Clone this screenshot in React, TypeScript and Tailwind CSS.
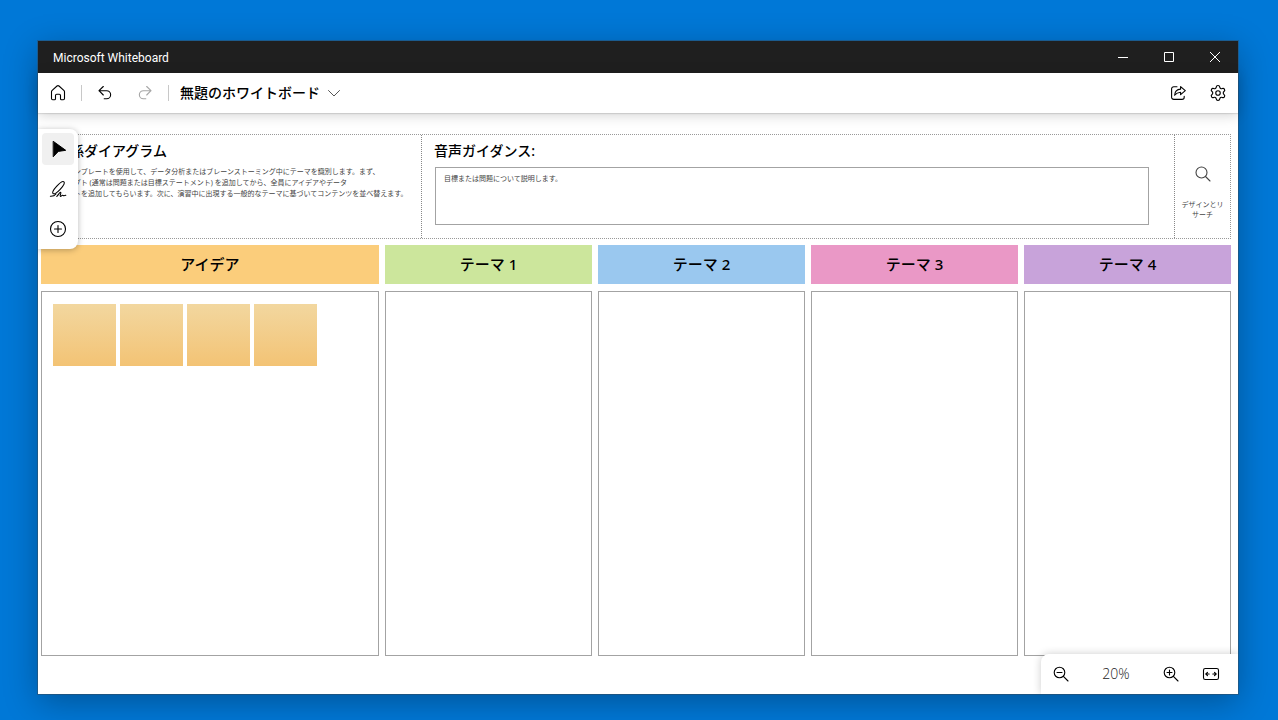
import type { ReactNode } from "react";
import { Settings } from "lucide-react";

type IconProps = { children: ReactNode; className?: string };

function Icon({ children, className = "size-5" }: IconProps) {
  return (
    <svg
      viewBox="0 0 20 20"
      className={className}
      fill="none"
      stroke="currentColor"
      strokeWidth="1.1"
      strokeLinecap="round"
      strokeLinejoin="round"
      aria-hidden="true"
    >
      {children}
    </svg>
  );
}

type ButtonProps = { label: string; children: ReactNode; className?: string; disabled?: boolean };

function IconButton({ label, children, className = "text-black", disabled }: ButtonProps) {
  return (
    <button
      type="button"
      aria-label={label}
      disabled={disabled}
      className={`flex h-10 w-10 shrink-0 items-center justify-center ${className}`}
    >
      {children}
    </button>
  );
}

function TitleBar() {
  const control = "flex h-8 w-[46px] items-center justify-center";
  return (
    <header className="flex h-8 shrink-0 items-center bg-[#1f1f1f] pl-[15px] text-white">
      <span className="flex-1 pt-px font-['Roboto','Noto_Sans_CJK_JP',sans-serif] text-xs">Microsoft Whiteboard</span>
      <button type="button" aria-label="最小化" className={control}>
        <svg width="10" height="10" stroke="currentColor" aria-hidden="true">
          <path d="M0 5.5h10" />
        </svg>
      </button>
      <button type="button" aria-label="最大化" className={control}>
        <svg width="10" height="10" fill="none" stroke="currentColor" aria-hidden="true">
          <path d="M.5.5h9v9h-9z" />
        </svg>
      </button>
      <button type="button" aria-label="閉じる" className={control}>
        <svg width="10" height="10" stroke="currentColor" aria-hidden="true">
          <path d="M0 0l10 10M10 0L0 10" />
        </svg>
      </button>
    </header>
  );
}

function Toolbar() {
  return (
    <div className="relative z-10 flex h-10 shrink-0 items-center bg-white shadow-[0_1px_1px_rgba(0,0,0,0.1),0_2px_12px_rgba(0,0,0,0.18)]">
      <IconButton label="ホーム">
        <Icon>
          <path d="M3.5 8.8c0-.6.25-1.1.7-1.5L9 3a1.5 1.5 0 0 1 2 0l4.8 4.3c.45.4.7.9.7 1.5v6.7a1.2 1.2 0 0 1-1.2 1.2h-1.8a1 1 0 0 1-1-1v-3.2a1.2 1.2 0 0 0-1.2-1.2H8.7a1.2 1.2 0 0 0-1.2 1.2v3.2a1 1 0 0 1-1 1H4.7a1.2 1.2 0 0 1-1.2-1.2z" />
        </Icon>
      </IconButton>
      <span className="mx-[3px] h-4 w-px bg-[#c8c8c8]" />
      <IconButton label="元に戻す">
        <Icon>
          <path d="M8.3 3.5L4 7.700l4.300 4.300M4 7.700h7.600a4 4 0 0 1 0 8.100H9.200" />
        </Icon>
      </IconButton>
      <IconButton label="やり直し" disabled className="text-[#a6a6a6]">
        <Icon>
          <path d="M11.700 3.500L16 7.700l-4.300 4.300M16 7.700H8.400a4 4 0 0 0 0 8.100h2.400" />
        </Icon>
      </IconButton>
      <span className="mx-[3px] h-4 w-px bg-[#c8c8c8]" />
      <button type="button" className="flex items-center gap-1 pl-2 text-sm font-medium text-black">
        無題のホワイトボード
        <Icon>
          <path d="M4.5 7.5L10 13l5.5-5.5" stroke="#555" strokeWidth="1" />
        </Icon>
      </button>
      <div className="flex-1" />
      <IconButton label="共有">
        <Icon>
          <path d="M9 3.7H5.8A2.2 2.2 0 0 0 3.6 6v8.2a2.2 2.2 0 0 0 2.2 2.2H14a2.2 2.2 0 0 0 2.2-2.2v-1" />
          <path d="M12.6 3.6v2.500C8.700 6.400 6.800 8.600 6.600 12.200c1.600-2 3.400-2.900 6-3v2.500l4.700-4z" />
        </Icon>
      </IconButton>
      <IconButton label="設定">
        <Settings size={18} strokeWidth={1.500} aria-hidden="true" />
      </IconButton>
    </div>
  );
}

function ToolPalette() {
  return (
    <nav
      aria-label="ツール"
      className="absolute top-4 left-0 z-10 flex flex-col rounded-r-lg bg-white shadow-[0_1px_6px_rgba(0,0,0,0.28)]"
    >
      <button type="button" aria-label="選択" className="m-1 flex size-8 items-center justify-center rounded bg-[#f0f0f0]">
        <Icon>
          <path d="M5.500 2.500L17.700 11.300l-7.400 1.100L5.500 17.500z" fill="#000" stroke="#000" strokeWidth="1" />
        </Icon>
      </button>
      <IconButton label="手描き入力">
        <Icon>
          <ellipse cx="10.500" cy="8.700" rx="8" ry="2.300" transform="rotate(-47 10.500 8.700)" />
          <path d="M2.400 17.300c2.200.1 4.200-.4 5.600-2.300" />
          <path d="M8.800 17.400c1.200-.8 2.900-4.500 3.900-4.100 1 .4-1.300 3.500-.4 4 .8.400 1.500-1.400 2.400-1.100.8.300.6 1.100 3.100.100" />
        </Icon>
      </IconButton>
      <IconButton label="作成">
        <Icon>
          <circle cx="10" cy="10" r="7.500" />
          <path d="M10 6.500v7M6.500 10h7" />
        </Icon>
      </IconButton>
    </nav>
  );
}

function BriefPanel() {
  return (
    <section className="grid grid-cols-[381px_1fr_55px] border border-l-0 border-dotted border-[#999]">
      <div className="overflow-hidden border-r border-dotted border-[#888] pl-3">
        <h1 className="mt-1 pl-[3px] text-sm leading-6 font-medium text-black">関係ダイアグラム</h1>
        <p className="mt-[3px] text-[7px] leading-[11px] whitespace-nowrap text-[#444]">
          このテンプレートを使用して、データ分析またはブレーンストーミング中にテーマを識別します。まず、
          <br />
          プロンプト (通常は問題または目標ステートメント) を追加してから、全員にアイデアやデータ
          <br />
          ポイントを追加してもらいます。次に、演習中に出現する一般的なテーマに基づいてコンテンツを並べ替えます。
        </p>
      </div>
      <div className="border-r border-dotted border-[#888] pr-[25px] pb-[13px] pl-3">
        <h2 className="mt-1 text-sm leading-6 font-medium text-black">音声ガイダンス:</h2>
        <div className="mt-1 ml-px h-[58px] border border-[#a3a3a3] px-2 py-1.5 text-[7px] leading-[10px] text-[#444]">
          目標または問題について説明します。
        </div>
      </div>
      <div className="flex flex-col items-center px-1 pt-[29px] text-center text-[7px] leading-[10px] text-[#444]">
        <Icon>
          <circle cx="8.500" cy="8.500" r="5.500" />
          <path d="M12.500 12.500l4.500 4.500" />
        </Icon>
        <p className="mt-4 whitespace-nowrap">
          デザインとリ
          <br />
          サーチ
        </p>
      </div>
    </section>
  );
}

const columns = [
  { title: "アイデア", color: "bg-[#fbcd7b]", notes: 4 },
  { title: "テーマ 1", color: "bg-[#cce69c]", notes: 0 },
  { title: "テーマ 2", color: "bg-[#9ac8ef]", notes: 0 },
  { title: "テーマ 3", color: "bg-[#ea98c6]", notes: 0 },
  { title: "テーマ 4", color: "bg-[#c8a3da]", notes: 0 },
];

function Board() {
  return (
    <div className="flex flex-1 flex-col gap-1.5 pt-[21px] pr-[7px] pb-[38px] pl-[3px]">
      <BriefPanel />
      <div className="grid flex-1 grid-cols-[338fr_207fr_207fr_207fr_207fr] gap-1.5">
        {columns.map((column) => (
          <section key={column.title} className="flex flex-col gap-[7px]">
            <h2 className={`flex h-[39px] items-center justify-center text-[15px] font-medium text-black ${column.color}`}>
              {column.title}
            </h2>
            <div className="flex flex-1 items-start gap-1 border border-[#a3a3a3] px-[11px] pt-3">
              {Array.from({ length: column.notes }, (_, i) => (
                <div key={i} className="h-[62px] w-[63px] bg-linear-to-b from-[#f2d79f] to-[#f3c374]" />
              ))}
            </div>
          </section>
        ))}
      </div>
    </div>
  );
}

function ZoomBar() {
  return (
    <div className="absolute right-0 bottom-0 flex h-10 items-center rounded-tl-lg bg-white pr-[7px] shadow-[0_0_8px_rgba(0,0,0,0.2)]">
      <IconButton label="縮小">
        <Icon>
          <circle cx="8.500" cy="8.500" r="5.300" />
          <path d="M12.400 12.400l4.600 4.600M6 8.500h5" />
        </Icon>
      </IconButton>
      <span className="w-[70px] text-center font-['Open_Sans',sans-serif] text-sm font-light text-[#222]">20%</span>
      <IconButton label="拡大">
        <Icon>
          <circle cx="8.500" cy="8.500" r="5.300" />
          <path d="M12.400 12.400l4.600 4.600M6 8.500h5M8.500 6v5" />
        </Icon>
      </IconButton>
      <IconButton label="画面に合わせる">
        <Icon>
          <rect x="2.500" y="4.500" width="15" height="11" rx="1.800" />
          <path d="M6.500 8.300L4.800 10l1.700 1.700M4.800 10h3.400M13.500 8.300l1.700 1.700-1.700 1.700M15.200 10h-3.400" />
        </Icon>
      </IconButton>
    </div>
  );
}

export default function App() {
  return (
    <div className="flex min-h-screen flex-col bg-[#0078d7] pt-[41px] pr-10 pb-[26px] pl-[38px] font-['Noto_Sans','Noto_Sans_CJK_JP',sans-serif]">
      <div className="flex flex-1 flex-col bg-white shadow-[0_0_0_1px_rgba(60,70,80,0.45),0_8px_32px_rgba(0,0,0,0.3)]">
        <TitleBar />
        <Toolbar />
        <main className="relative flex flex-1 flex-col overflow-hidden">
          <Board />
          <ToolPalette />
          <ZoomBar />
        </main>
      </div>
    </div>
  );
}
